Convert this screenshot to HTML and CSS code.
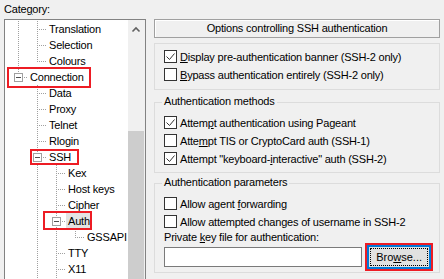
FILE: index.html
```html
<!DOCTYPE html>
<html lang="en">
<head>
    <meta charset="UTF-8">
    <title>PuTTY Configuration - Auth</title>
    <link rel="stylesheet" href="styles.css">
</head>
<body>
    <div class="side">
        <div class="side-label">Cate<u>g</u>ory:</div>
        <div class="tree">
            <div class="tree-items">
                <div class="row"><span class="c v"></span><span class="c t"></span><span class="name">Translation</span></div>
                <div class="row"><span class="c v"></span><span class="c t"></span><span class="name">Selection</span></div>
                <div class="row"><span class="c v"></span><span class="c l"></span><span class="name">Colours</span></div>
                <div class="row"><span class="c l"><span class="exp"></span></span><span class="name">Connection</span></div>
                <div class="row"><span class="c"></span><span class="c t"></span><span class="name">Data</span></div>
                <div class="row"><span class="c"></span><span class="c t"></span><span class="name">Proxy</span></div>
                <div class="row"><span class="c"></span><span class="c t"></span><span class="name">Telnet</span></div>
                <div class="row"><span class="c"></span><span class="c t"></span><span class="name">Rlogin</span></div>
                <div class="row"><span class="c"></span><span class="c t"><span class="exp"></span></span><span class="name">SSH</span></div>
                <div class="row"><span class="c"></span><span class="c v"></span><span class="c t"></span><span class="name">Kex</span></div>
                <div class="row"><span class="c"></span><span class="c v"></span><span class="c t"></span><span class="name">Host keys</span></div>
                <div class="row"><span class="c"></span><span class="c v"></span><span class="c t"></span><span class="name">Cipher</span></div>
                <div class="row"><span class="c"></span><span class="c v"></span><span class="c t"><span class="exp"></span></span><span class="name selected">Auth</span></div>
                <div class="row"><span class="c"></span><span class="c v"></span><span class="c v"></span><span class="c l"></span><span class="name">GSSAPI</span></div>
                <div class="row"><span class="c"></span><span class="c v"></span><span class="c t"></span><span class="name">TTY</span></div>
                <div class="row"><span class="c"></span><span class="c v"></span><span class="c t"></span><span class="name">X11</span></div>
                <div class="row"><span class="c"></span><span class="c v"></span><span class="c v"></span></div>
            </div>
            <div class="scroll">
                <div class="arrow">
                    <svg width="17" height="17" viewBox="0 0 17 17"><polyline points="4.5,11.5 8,8 11.5,11.5" fill="none" stroke="#606060" stroke-width="1.6"/></svg>
                </div>
                <div class="thumb"></div>
            </div>
        </div>
    </div>

    <div class="panel">
        <div class="heading">Options controlling SSH authentication</div>

        <div class="group g1">
            <label class="check"><span class="box"><svg width="11" height="11" viewBox="0 0 11 11"><polyline points="1.5,5.5 4.5,8.5 9.5,2.5" fill="none" stroke="#333" stroke-width="1"/></svg></span><span><u>D</u>isplay pre-authentication banner (SSH-2 only)</span></label>
            <label class="check"><span class="box"></span><span><u>B</u>ypass authentication entirely (SSH-2 only)</span></label>
        </div>

        <div class="group g2">
            <div class="group-title">Authentication methods</div>
            <div class="rows">
                <label class="check"><span class="box"><svg width="11" height="11" viewBox="0 0 11 11"><polyline points="1.5,5.5 4.5,8.5 9.5,2.5" fill="none" stroke="#333" stroke-width="1"/></svg></span><span>Attem<u>p</u>t authentication using Pageant</span></label>
                <label class="check"><span class="box"></span><span>Atte<u>m</u>pt TIS or CryptoCard auth (SSH-1)</span></label>
                <label class="check"><span class="box"><svg width="11" height="11" viewBox="0 0 11 11"><polyline points="1.5,5.5 4.5,8.5 9.5,2.5" fill="none" stroke="#333" stroke-width="1"/></svg></span><span>Attempt "keyboard-<u>i</u>nteractive" auth (SSH-2)</span></label>
            </div>
        </div>

        <div class="group g3">
            <div class="group-title">Authentication parameters</div>
            <div class="rows">
                <label class="check"><span class="box"></span><span>Allow agent <u>f</u>orwarding</span></label>
                <label class="check"><span class="box"></span><span>Allow attempted changes of username in SSH-2</span></label>
            </div>
            <div class="field-label">Private <u>k</u>ey file for authentication:</div>
            <div class="file-row">
                <input type="text" class="file-input">
                <button class="browse"><span class="focus">Bro<u>w</u>se...</span></button>
            </div>
        </div>
    </div>

    <div class="mark mark-conn"></div>
    <div class="mark mark-ssh"></div>
    <div class="mark mark-auth"></div>
</body>
</html>
```

FILE: styles.css
```css
body {
    margin: 0;
    width: 444px;
    height: 279px;
    padding: 3px 4px 0;
    box-sizing: border-box;
    overflow: hidden;
    position: relative;
    display: flex;
    gap: 8px;
    background-color: #f0f0f0;
    color: #000;
    font-family: "Liberation Sans", Arial, sans-serif;
    font-size: 11px;
    letter-spacing: -0.2px;
}

/* left: category tree */
.side {
    width: 142px;
    flex: none;
}
.side-label {
    line-height: 13px;
}
.tree {
    margin-top: 3px;
    height: 270px;
    display: flex;
    box-sizing: border-box;
    border: 1px solid #828282;
    background-color: #fff;
}
.tree-items {
    flex: 1;
    padding: 1px 0 0 4px;
    overflow: hidden;
}
.row {
    display: flex;
    height: 16px;
    line-height: 16px;
    white-space: nowrap;
}
.c {
    display: block;
    flex: none;
    width: 19px;
    height: 16px;
}
.v {
    background: repeating-linear-gradient(to bottom, #a0a0a0 0 1px, transparent 1px 2px) 9px 0 / 1px 16px no-repeat;
}
.t {
    background:
        repeating-linear-gradient(to bottom, #a0a0a0 0 1px, transparent 1px 2px) 9px 0 / 1px 16px no-repeat,
        repeating-linear-gradient(to right, #a0a0a0 0 1px, transparent 1px 2px) 9px 8px / 10px 1px no-repeat;
}
.l {
    background:
        repeating-linear-gradient(to bottom, #a0a0a0 0 1px, transparent 1px 2px) 9px 0 / 1px 9px no-repeat,
        repeating-linear-gradient(to right, #a0a0a0 0 1px, transparent 1px 2px) 9px 8px / 10px 1px no-repeat;
}
.exp {
    display: block;
    width: 9px;
    height: 9px;
    margin: 4px 0 0 5px;
    box-sizing: border-box;
    border: 1px solid #a0a0a0;
    background: linear-gradient(#505050, #505050) center / 5px 1px no-repeat, #fff;
}
.name {
    padding: 0 2px;
}
.name.selected {
    background-color: #e3e3e3;
}
.scroll {
    width: 17px;
    flex: none;
    display: flex;
    flex-direction: column;
    background-color: #f0f0f0;
}
.arrow {
    height: 17px;
}
.arrow svg {
    display: block;
}
.thumb {
    flex: 1;
    margin: 94px 1px 0 0;
    background-color: #cdcdcd;
}

/* right: options panel */
.panel {
    width: 286px;
    flex: none;
    padding-top: 16px;
}
.heading {
    height: 19px;
    box-sizing: border-box;
    border: 1px solid #a0a0a0;
    box-shadow: inset 1px 1px 0 #fff;
    line-height: 17px;
    text-align: center;
}
.group {
    border: 1px solid #dcdcdc;
    padding: 0 8px 4px 9px;
}
.g1 {
    margin-top: 5px;
    padding-top: 4px;
    padding-bottom: 5px;
}
.g2 {
    margin-top: 12px;
}
.g3 {
    margin-top: 10px;
    padding-bottom: 3px;
}
.group-title {
    width: fit-content;
    margin: -8px 0 0 -2px;
    padding: 0 2px;
    line-height: 13px;
    background-color: #f0f0f0;
}
.rows {
    margin-top: 6px;
}
.check {
    display: flex;
    align-items: flex-start;
    gap: 3px;
    height: 18px;
    line-height: 18px;
    white-space: nowrap;
}
.box {
    width: 13px;
    height: 13px;
    margin-top: 2px;
    flex: none;
    box-sizing: border-box;
    border: 1px solid #333;
    background-color: #fff;
}
.box svg {
    display: block;
}
.field-label {
    line-height: 13px;
}
.file-row {
    margin-top: 1px;
    display: flex;
    align-items: center;
    gap: 5px;
}
.file-input {
    width: 199px;
    height: 20px;
    margin: 0;
    box-sizing: border-box;
    border: 1px solid #7a7a7a;
    background-color: #fff;
}
.browse {
    width: 64px;
    height: 24px;
    margin: 0;
    padding: 1px;
    box-sizing: border-box;
    border: 2px solid #0078d7;
    background-color: #e1e1e1;
    outline: 2px solid #ed1c24;
    font: inherit;
    color: #000;
}
.focus {
    display: flex;
    align-items: center;
    justify-content: center;
    height: 100%;
    box-sizing: border-box;
    border: 1px dotted #000;
}

/* red annotation boxes drawn over the tree */
.mark {
    position: absolute;
    box-sizing: border-box;
    border: 2px solid #ed1c24;
}
.mark-conn {
    left: 7px;
    top: 67px;
    width: 84px;
    height: 21px;
}
.mark-ssh {
    left: 30px;
    top: 149px;
    width: 49px;
    height: 16px;
}
.mark-auth {
    left: 43px;
    top: 211px;
    width: 49px;
    height: 19px;
}
```
